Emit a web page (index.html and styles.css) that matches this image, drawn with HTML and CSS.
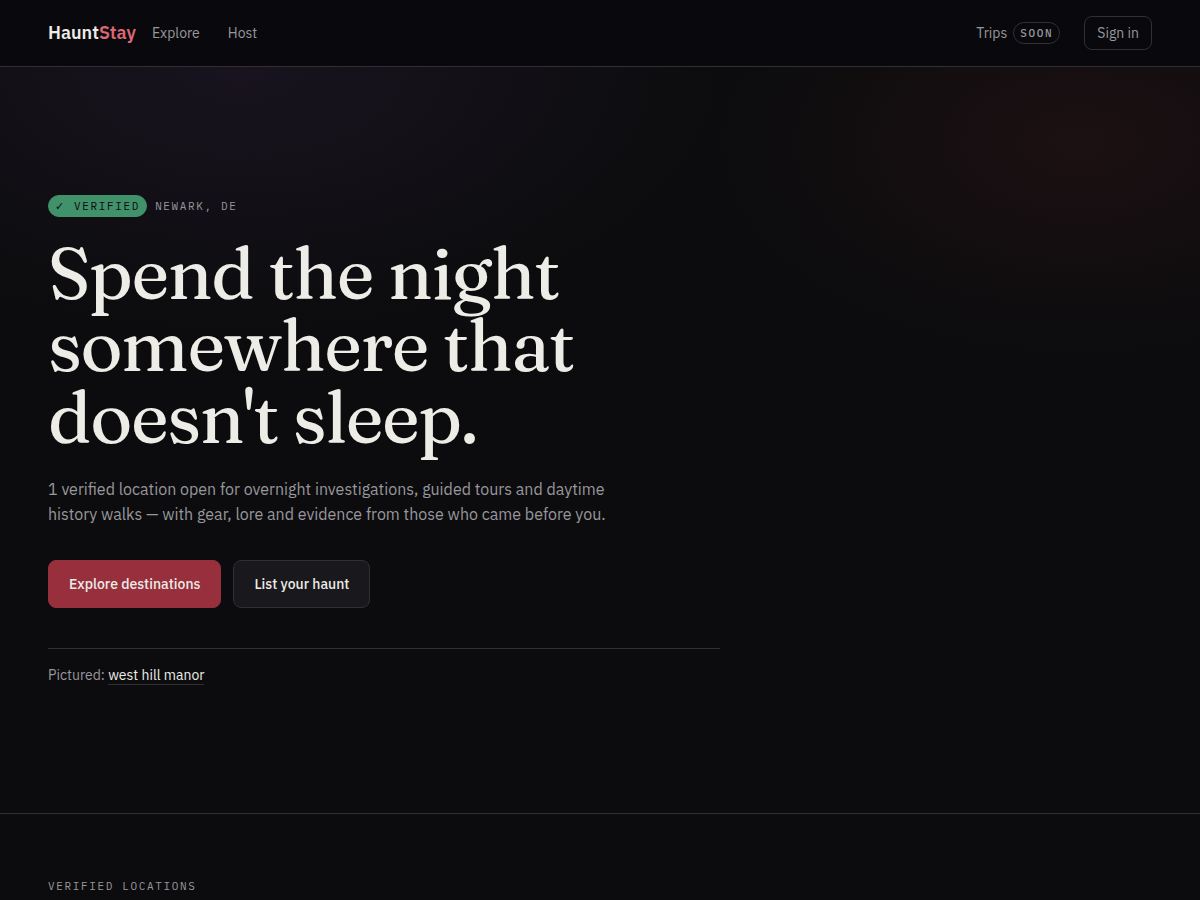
FILE: index.html
```html
<!DOCTYPE html>
<html lang="en">
<head>
    <meta charset="UTF-8">
    <meta name="viewport" content="width=device-width, initial-scale=1.0">
    <title>HauntStay</title>
    <link rel="stylesheet" href="styles.css">
</head>
<body>
    <header class="site-header">
        <a href="#" class="logo">Haunt<span>Stay</span></a>
        <nav class="nav-main">
            <a href="#">Explore</a>
            <a href="#">Host</a>
        </nav>
        <div class="nav-account">
            <a href="#" class="trips">Trips <span class="pill">Soon</span></a>
            <a href="#" class="sign-in">Sign in</a>
        </div>
    </header>

    <main>
        <section class="hero">
            <div class="hero-content">
                <div class="hero-meta">
                    <span class="pill pill-verified"><span class="check">✓</span> Verified</span>
                    <span class="eyebrow">Newark, DE</span>
                </div>
                <h1>Spend the night somewhere that doesn't sleep.</h1>
                <p class="lead">1 verified location open for overnight investigations, guided tours and daytime history walks — with gear, lore and evidence from those who came before you.</p>
                <div class="actions">
                    <button type="button" class="btn btn-primary">Explore destinations</button>
                    <button type="button" class="btn">List your haunt</button>
                </div>
                <p class="pictured">Pictured: <a href="#">west hill manor</a></p>
            </div>
        </section>

        <section class="locations">
            <h2 class="eyebrow">Verified locations</h2>
        </section>
    </main>
</body>
</html>
```
FILE: styles.css
```css
:root {
    --bg: #0c0c0e;
    --surface: #19191d;
    --border: #2f2f34;
    --text: #edece7;
    --muted: #98979c;
    --blood: #972f3d;
    --rose: #dc6877;
    --verified: #41916b;
    --sans: "IBM Plex Sans", Roboto, sans-serif;
    --mono: "IBM Plex Mono", "Liberation Mono", monospace;
    --serif: Fraunces, "DejaVu Serif Condensed", "DejaVu Serif", serif;
}

* {
    margin: 0;
    padding: 0;
    box-sizing: border-box;
}

body {
    background: var(--bg);
    color: var(--text);
    font-family: var(--sans);
    font-size: 16px;
    line-height: 25px;
    overflow-x: hidden;
}

a {
    color: inherit;
    text-decoration: none;
}

.site-header {
    display: flex;
    align-items: center;
    gap: 16px;
    padding: 16px 48px;
    background: #09090d;
    border-bottom: 1px solid var(--border);
    color: var(--muted);
    font-size: 14px;
    line-height: 20px;
}

.logo {
    color: var(--text);
    font-size: 18px;
    font-weight: 600;
}

.logo span {
    color: var(--rose);
}

.nav-main {
    display: flex;
    gap: 28px;
}

.nav-account {
    display: flex;
    align-items: center;
    gap: 24px;
    margin-left: auto;
}

.trips {
    display: flex;
    align-items: center;
    gap: 6px;
}

.sign-in {
    padding: 6px 12px;
    border: 1px solid var(--border);
    border-radius: 8px;
}

.pill,
.eyebrow {
    font-family: var(--mono);
    font-size: 11px;
    font-weight: 400;
    letter-spacing: 0.15em;
    line-height: 20px;
    text-transform: uppercase;
    color: var(--muted);
}

.pill {
    padding: 0 6px;
    border: 1px solid var(--border);
    border-radius: 11px;
    font-weight: 500;
}

.pill-verified {
    background: var(--verified);
    border-color: var(--verified);
    color: #0b0b0d;
    font-weight: 400;
}

.check {
    font-family: "DejaVu Sans", sans-serif;
    line-height: 1;
}

.hero {
    padding: 128px 48px;
    border-bottom: 1px solid var(--border);
    background:
        radial-gradient(ellipse 480px 260px at 20% 0, rgba(90, 60, 120, 0.16), transparent),
        radial-gradient(ellipse 360px 210px at 90% 10%, rgba(151, 47, 50, 0.11), transparent);
}

.hero-content {
    max-width: 672px;
}

.hero-meta {
    display: flex;
    align-items: center;
    gap: 8px;
    margin-bottom: 20px;
}

h1 {
    max-width: 600px;
    margin-bottom: 24px;
    font-family: var(--serif);
    font-size: 72px;
    font-weight: 400;
    letter-spacing: -0.02em;
    line-height: 72px;
}

.lead {
    max-width: 576px;
    margin-bottom: 33px;
    color: var(--muted);
}

.actions {
    display: flex;
    gap: 12px;
    margin-bottom: 40px;
}

.btn {
    padding: 0 20px;
    height: 48px;
    border: 1px solid var(--border);
    border-radius: 8px;
    background: var(--surface);
    color: var(--text);
    font-family: var(--sans);
    font-size: 14px;
    font-weight: 500;
    cursor: pointer;
}

.btn-primary {
    background: var(--blood);
    border-color: var(--blood);
}

.pictured {
    padding-top: 16px;
    border-top: 1px solid var(--border);
    color: var(--muted);
    font-size: 14px;
    line-height: 20px;
}

.pictured a {
    color: var(--text);
    border-bottom: 1px solid var(--border);
}

.locations {
    padding: 62px 48px 64px;
}
```
